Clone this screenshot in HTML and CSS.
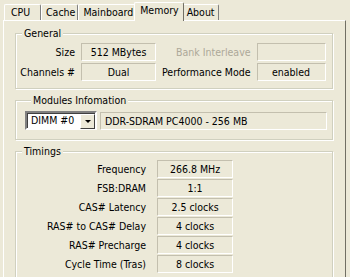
FILE: index.html
```html
<!DOCTYPE html>
<html lang="en">

<head>
    <meta charset="UTF-8">
    <title>CPU-Z Memory</title>
    <link rel="stylesheet" href="styles.css">
</head>

<body>
    <div class="window">
        <!-- Tab strip -->
        <div class="tabs">
            <div class="tab">CPU</div>
            <div class="tab">Cache</div>
            <div class="tab">Mainboard</div>
            <div class="tab active">Memory</div>
            <div class="tab">About</div>
        </div>

        <div class="panel">
            <!-- General -->
            <div class="group general">
                <div class="group-title">General</div>
                <div class="general-grid">
                    <span class="label">Size</span>
                    <span class="value">512 MBytes</span>
                    <span class="label disabled">Bank Interleave</span>
                    <span class="value"></span>

                    <span class="label">Channels #</span>
                    <span class="value">Dual</span>
                    <span class="label">Performance Mode</span>
                    <span class="value">enabled</span>
                </div>
            </div>

            <!-- Modules -->
            <div class="group modules">
                <div class="group-title">Modules Infomation</div>
                <div class="modules-row">
                    <div class="combo">
                        <span class="combo-text">DIMM #0</span>
                        <span class="combo-btn"><span class="arrow"></span></span>
                    </div>
                    <span class="value wide">DDR-SDRAM PC4000 - 256 MB</span>
                </div>
            </div>

            <!-- Timings -->
            <div class="group timings">
                <div class="group-title">Timings</div>
                <div class="timings-grid">
                    <span class="label">Frequency</span>
                    <span class="value">266.8 MHz</span>
                    <span class="label">FSB:DRAM</span>
                    <span class="value">1:1</span>
                    <span class="label">CAS# Latency</span>
                    <span class="value">2.5 clocks</span>
                    <span class="label">RAS# to CAS# Delay</span>
                    <span class="value">4 clocks</span>
                    <span class="label">RAS# Precharge</span>
                    <span class="value">4 clocks</span>
                    <span class="label">Cycle Time (Tras)</span>
                    <span class="value">8 clocks</span>
                </div>
            </div>
        </div>
    </div>
</body>

</html>
```

FILE: styles.css
```css
* {
    box-sizing: border-box;
}

body {
    margin: 0;
    background-color: #ECE9D8;
    font-family: "DejaVu Sans Condensed", "Liberation Sans", sans-serif;
    font-size: 10.5px;
    color: #000;
    overflow: hidden;
}

.window {
    padding-left: 3px;
}

/* Tab strip */
.tabs {
    display: flex;
    align-items: flex-end;
    height: 20px;
    padding-left: 1px;
}

.tab {
    min-width: 37px;
    height: 16px;
    line-height: 15px;
    padding: 0 2px 0 4px;
    border-top: 1px solid #fff;
    border-left: 1px solid #fff;
    border-right: 1px solid #808080;
    border-radius: 2px 2px 0 0;
}

.tab:first-child {
    padding-left: 6px;
}

.tab.active {
    position: relative;
    z-index: 1;
    height: 19px;
    margin: 0 -2px -1px -2px;
    padding: 0 4px 0 5px;
    background-color: #ECE9D8;
    border-right-color: #716F64;
}

/* Page under the tabs */
.panel {
    width: 343px;
    height: 300px;
    padding: 12px 12px 0 11px;
    border: 1px solid;
    border-color: #fff #716F64 #716F64 #fff;
}

/* Etched group boxes */
.group {
    border: 1px solid #D0D0BF;
    box-shadow: inset 1px 1px #fff, 1px 1px #fff;
}

.group-title {
    display: table;
    margin: -7px 0 0 6px;
    padding: 0 2px;
    line-height: 13px;
    background-color: #ECE9D8;
}

.label {
    text-align: right;
    white-space: nowrap;
    line-height: 18px;
}

.disabled {
    color: #ACA899;
}

.value {
    height: 18px;
    line-height: 16px;
    text-align: center;
    white-space: nowrap;
    border: 1px solid;
    border-color: #C3BFAE #fff #fff #C3BFAE;
}

.general {
    height: 56px;
    padding-right: 7px;
}

.general-grid {
    display: grid;
    grid-template-columns: 59px 75px 1fr 69px;
    grid-auto-rows: 18px;
    column-gap: 6px;
    row-gap: 2px;
    margin-top: 3px;
}

.modules {
    margin-top: 11px;
    padding: 0 5px 9px 9px;
}

.modules-row {
    display: flex;
    gap: 3px;
    margin-top: 4px;
}

.combo {
    display: flex;
    align-items: center;
    width: 72px;
    height: 19px;
    background-color: #fff;
    border: 2px solid;
    border-color: #808080 #fff #fff #808080;
    box-shadow: inset 1px 1px #404040;
}

.combo-text {
    flex: 1;
    padding-left: 4px;
    line-height: 15px;
}

.combo-btn {
    display: flex;
    align-items: center;
    justify-content: center;
    width: 15px;
    height: 15px;
    margin-top: 1px;
    background-color: #ECE9D8;
    border: 1px solid;
    border-color: #fff #404040 #404040 #fff;
}

.arrow {
    width: 0;
    height: 0;
    border-left: 3px solid transparent;
    border-right: 3px solid transparent;
    border-top: 3px solid #000;
}

.value.wide {
    flex: 1;
    height: 18px;
    margin-top: 1px;
    text-align: left;
    padding-left: 4px;
}

.timings {
    margin-top: 11px;
    height: 200px;
}

.timings-grid {
    display: grid;
    grid-template-columns: 130px 76px;
    grid-auto-rows: 18px;
    column-gap: 11px;
    row-gap: 1px;
    margin-top: 2px;
}
```
